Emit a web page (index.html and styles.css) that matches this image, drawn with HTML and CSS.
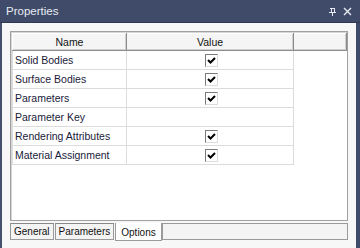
FILE: index.html
```html
<!DOCTYPE html>
<html lang="en">
  <head>
    <meta charset="UTF-8" />
    <title>Properties</title>
    <link rel="stylesheet" href="styles.css">
  </head>
  <body>
    <div class="window">
      <div class="titlebar">
        <span class="title">Properties</span>
        <span class="title-icons">
          <svg width="9" height="9" viewBox="0 0 9 9">
            <path d="M2 1h5M3 1v4M6 1v4M1 5h7M4.5 5v4" stroke="#e6e9f0" stroke-width="1" fill="none" shape-rendering="crispEdges"/>
          </svg>
          <svg width="9" height="9" viewBox="0 0 9 9">
            <path d="M1 1l7 7M8 1l-7 7" stroke="#e6e9f0" stroke-width="1.4" fill="none"/>
          </svg>
        </span>
      </div>

      <div class="panel">
        <div class="grid-box">
          <table class="grid">
            <thead>
              <tr>
                <th class="col-name">Name</th>
                <th class="col-value">Value</th>
                <th class="col-rest"></th>
              </tr>
            </thead>
            <tbody>
              <tr><td>Solid Bodies</td><td class="check-cell"><span class="check"><svg width="11" height="11" viewBox="0 0 11 11"><path d="M2 5l2.5 2.5L9 3" stroke="#000" stroke-width="2" fill="none"/></svg></span></td><td class="rest"></td></tr>
              <tr><td>Surface Bodies</td><td class="check-cell"><span class="check"><svg width="11" height="11" viewBox="0 0 11 11"><path d="M2 5l2.5 2.5L9 3" stroke="#000" stroke-width="2" fill="none"/></svg></span></td><td class="rest"></td></tr>
              <tr><td>Parameters</td><td class="check-cell"><span class="check"><svg width="11" height="11" viewBox="0 0 11 11"><path d="M2 5l2.5 2.5L9 3" stroke="#000" stroke-width="2" fill="none"/></svg></span></td><td class="rest"></td></tr>
              <tr><td>Parameter Key</td><td class="check-cell"></td><td class="rest"></td></tr>
              <tr><td>Rendering Attributes</td><td class="check-cell"><span class="check"><svg width="11" height="11" viewBox="0 0 11 11"><path d="M2 5l2.5 2.5L9 3" stroke="#000" stroke-width="2" fill="none"/></svg></span></td><td class="rest"></td></tr>
              <tr><td>Material Assignment</td><td class="check-cell"><span class="check"><svg width="11" height="11" viewBox="0 0 11 11"><path d="M2 5l2.5 2.5L9 3" stroke="#000" stroke-width="2" fill="none"/></svg></span></td><td class="rest"></td></tr>
            </tbody>
          </table>
        </div>

        <div class="tabs">
          <span class="tab">General</span>
          <span class="tab">Parameters</span>
          <span class="tab active">Options</span>
          <span class="tab-fill"></span>
        </div>
      </div>
    </div>
  </body>
</html>
```

FILE: styles.css
```css
body {
  margin: 0;
  background: #f4f4f4;
  font-family: "Liberation Sans", Arial, sans-serif;
}

.window {
  width: 360px;
  height: 248px;
  display: flex;
  flex-direction: column;
  overflow: hidden;
}

.titlebar {
  height: 22px;
  background: #3f4b69;
  border-bottom: 1px solid #2f3952;
  display: flex;
  align-items: center;
  justify-content: space-between;
  padding: 0 8px 0 6px;
  flex-shrink: 0;
}

.title {
  color: #e9ecf2;
  font-size: 11.5px;
}

.title-icons {
  display: flex;
  gap: 6px;
  align-items: center;
}

.panel {
  flex: 1;
  border-left: 2px solid #44506e;
  border-right: 4px solid #3f4b69;
  background: #f7f7f7;
  padding: 8px 8px 0 8px;
  display: flex;
  flex-direction: column;
}

.grid-box {
  height: 188px;
  background: #fff;
  border: 1px solid #a0a0a0;
  box-shadow: inset 1px 1px 0 #d6d6d6;
}

.grid {
  border-collapse: collapse;
  font-size: 10.5px;
  color: #1a1a3a;
  margin: 1px 0 0 1px;
}

.grid th {
  height: 16px;
  padding: 0;
  font-weight: normal;
  color: #111;
  background: #f5f5f5;
  border: 1px solid #8c8c8c;
  border-top-color: #fff;
  border-left-color: #fff;
  box-shadow: inset -1px -1px 0 #d0d0d0;
  text-align: center;
}

.col-name {
  width: 113px;
}

.col-value {
  width: 167px;
}

.col-rest {
  width: 52px;
}

.grid td {
  height: 18px;
  padding: 0 0 0 2px;
  border: 1px solid #dcdcdc;
  white-space: nowrap;
}

.grid td.rest {
  border: none;
}

.check-cell {
  text-align: center;
}

.check {
  display: inline-block;
  width: 11px;
  height: 11px;
  background: #fff;
  border: 1px solid #7a7a7a;
  border-right-color: #dcdcdc;
  border-bottom-color: #dcdcdc;
  vertical-align: middle;
}

.check svg {
  display: block;
}

.tabs {
  display: flex;
  align-items: flex-start;
  margin-top: 2px;
  font-size: 10px;
}

.tab {
  height: 15px;
  line-height: 15px;
  padding: 0 3px;
  background: #f4f4f4;
  border: 1px solid #9a9a9a;
  border-top-color: #888;
  color: #111;
}

.tab + .tab {
  margin-left: 1px;
}

.tab.active {
  height: 17px;
  line-height: 20px;
  background: #fff;
  border-top: none;
  padding: 0 5px;
}

.tab-fill {
  flex: 1;
  height: 15px;
  border: 1px solid #9a9a9a;
  background: #f4f4f4;
}
```
